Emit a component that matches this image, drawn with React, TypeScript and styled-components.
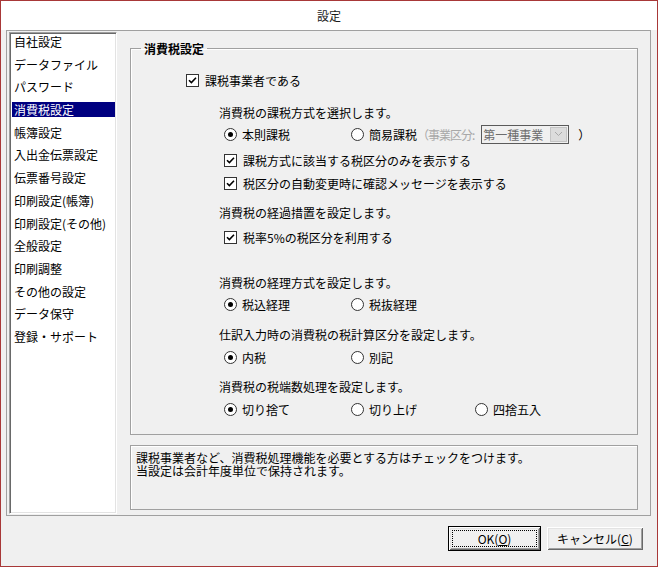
import styled, { createGlobalStyle } from "styled-components";

const GlobalStyle = createGlobalStyle`
  html, body {
    margin: 0;
    padding: 0;
    background: #f0f0f0;
  }
  body {
    font-family: "Noto Sans CJK JP", "Noto Sans", sans-serif;
    font-size: 12px;
    color: #000;
    overflow: hidden;
  }
  * {
    box-sizing: border-box;
  }
`;

const menuItems = [
    "自社設定",
    "データファイル",
    "パスワード",
    "消費税設定",
    "帳簿設定",
    "入出金伝票設定",
    "伝票番号設定",
    "印刷設定(帳簿)",
    "印刷設定(その他)",
    "全般設定",
    "印刷調整",
    "その他の設定",
    "データ保守",
    "登録・サポート",
];

const Window = styled.div`
    width: 658px;
    height: 567px;
    border: 1px solid #a83838;
    background: #f0f0f0;
    display: flex;
    flex-direction: column;
`;

const TitleBar = styled.div`
    height: 29px;
    background: #fff;
    display: flex;
    align-items: center;
    justify-content: center;
    color: #1a1a1a;
`;

const Client = styled.div`
    flex: 1;
    padding: 0 6px 0 5px;
    display: flex;
    flex-direction: column;
`;

const Frame = styled.div`
    height: 486px;
    border: 1px solid #a0a0a0;
    padding: 1px 0 1px 2px;
    display: flex;
`;

const Sidebar = styled.ul`
    width: 108px;
    margin: 0;
    padding: 1px 1px 0 2px;
    list-style: none;
    background: #fff;
    border-top: 1px solid #a0a0a0;
    border-left: 1px solid #a0a0a0;
    border-right: 1px solid #fff;
    border-bottom: 1px solid #fff;
    box-shadow: inset 1px 1px #696969, inset -1px -1px #e3e3e3;
`;

const MenuItem = styled.li`
    height: 22.7px;
`;

const MenuLabel = styled.span<{ $active?: boolean }>`
    display: block;
    height: 15px;
    line-height: 15px;
    padding-left: 2px;
    white-space: nowrap;
    background: ${(p) => (p.$active ? "#000080" : "transparent")};
    color: ${(p) => (p.$active ? "#fff" : "#000")};
`;

const Main = styled.div`
    flex: 1;
    margin: 10px 12px 0 13px;
    display: flex;
    flex-direction: column;
`;

const GroupBox = styled.fieldset`
    margin: 0;
    padding: 0;
    min-width: 0;
    border: 1px solid #a0a0a0;
    box-shadow: inset 1px 1px #fff;
`;

const Legend = styled.legend`
    margin-left: 10px;
    padding: 0 3px;
    line-height: 13px;
    font-weight: bold;
`;

const GroupBody = styled.div`
    padding: 15px 0 15px 55px;
    display: flex;
    flex-direction: column;
`;

const Row = styled.div<{ $gap: number; $indent?: number }>`
    height: 20px;
    margin-top: ${(p) => p.$gap}px;
    margin-left: ${(p) => p.$indent ?? 0}px;
    display: flex;
    align-items: center;
    white-space: nowrap;
`;

const RadioGrid = styled.div<{ $gap: number }>`
    height: 20px;
    margin-top: ${(p) => p.$gap}px;
    margin-left: 38px;
    display: grid;
    grid-template-columns: 127px 124px auto;
    align-items: center;
    white-space: nowrap;
`;

const Option = styled.label`
    display: flex;
    align-items: center;
    gap: 5px;
`;

const CheckBox = styled.span`
    flex-shrink: 0;
    width: 13px;
    height: 13px;
    border: 1px solid #333;
    background: #fff;
    display: inline-flex;
    align-items: center;
    justify-content: center;
    margin-right: 1px;
`;

const RadioCircle = styled.span`
    flex-shrink: 0;
    width: 13px;
    height: 13px;
    border: 1px solid #333;
    border-radius: 50%;
    background: #fff;
    display: inline-flex;
    align-items: center;
    justify-content: center;
`;

const RadioDot = styled.span`
    width: 5px;
    height: 5px;
    border-radius: 50%;
    background: #000;
`;

const Muted = styled.span`
    color: #a8a8a8;
    letter-spacing: -1px;
`;

const Combo = styled.span`
    flex-shrink: 0;
    width: 88px;
    height: 19px;
    margin: 0 4px 0 2px;
    border: 1px solid #5a5a5a;
    background: #f0f0f0;
    display: inline-flex;
    align-items: stretch;
`;

const ComboText = styled.span`
    flex: 1;
    padding-left: 1px;
    line-height: 17px;
    color: #6d6d6d;
`;

const ComboButton = styled.span`
    flex-shrink: 0;
    width: 17px;
    margin: 1px;
    background: #dcdcdc;
    border: 1px solid #c4c4c4;
    display: inline-flex;
    align-items: center;
    justify-content: center;
`;

const Description = styled.div`
    height: 65px;
    margin-top: 10px;
    padding: 5px 5px;
    border: 1px solid #a0a0a0;
    box-shadow: inset 1px 1px #fff;
`;

const DescLine = styled.div`
    height: 13px;
    line-height: 13px;
    white-space: nowrap;
`;

const Footer = styled.div`
    display: flex;
    justify-content: flex-end;
    gap: 5px;
    padding: 10px 7px 0 0;
`;

const Button = styled.button<{ $default?: boolean; $width: number }>`
    position: relative;
    width: ${(p) => p.$width}px;
    height: 25px;
    padding: 0;
    font: inherit;
    color: #000;
    background: #f0f0f0;
    border: 1px solid ${(p) => (p.$default ? "#000" : "#f0f0f0")};
    box-shadow: inset 1px 1px #fff, inset -1px -1px #696969,
        inset 2px 2px #e3e3e3, inset -2px -2px #a0a0a0;

    ${(p) =>
        p.$default &&
        `&::after {
            content: "";
            position: absolute;
            inset: 3px;
            border: 1px dotted #000;
        }`}
`;

const Key = styled.span`
    text-decoration: underline;
`;

const Check = () => (
    <CheckBox>
        <svg width="9" height="9" viewBox="0 0 9 9">
            <path d="M1 4.2 L3.4 6.6 L8 1.8" fill="none" stroke="#000" strokeWidth="1.6" />
        </svg>
    </CheckBox>
);

const Radio = ({ checked }: { checked?: boolean }) => (
    <RadioCircle>{checked && <RadioDot />}</RadioCircle>
);

export default function App() {
    return (
        <>
            <GlobalStyle />
            <Window>
                <TitleBar>設定</TitleBar>
                <Client>
                    <Frame>
                        <Sidebar>
                            {menuItems.map((item) => (
                                <MenuItem key={item}>
                                    <MenuLabel $active={item === "消費税設定"}>{item}</MenuLabel>
                                </MenuItem>
                            ))}
                        </Sidebar>
                        <Main>
                            <GroupBox>
                                <Legend>消費税設定</Legend>
                                <GroupBody>
                                    <Row $gap={0}>
                                        <Option>
                                            <Check />
                                            課税事業者である
                                        </Option>
                                    </Row>

                                    <Row $gap={12} $indent={33}>消費税の課税方式を選択します。</Row>
                                    <RadioGrid $gap={2}>
                                        <Option>
                                            <Radio checked />
                                            本則課税
                                        </Option>
                                        <Option>
                                            <Radio />
                                            <span>
                                                簡易課税<Muted>（事業区分:</Muted>
                                            </span>
                                            <Combo>
                                                <ComboText>第一種事業</ComboText>
                                                <ComboButton>
                                                    <svg width="9" height="6" viewBox="0 0 9 6">
                                                        <path d="M1 1 L4.5 4.5 L8 1" fill="none" stroke="#a8a8a8" strokeWidth="1" />
                                                    </svg>
                                                </ComboButton>
                                            </Combo>
                                            ）
                                        </Option>
                                    </RadioGrid>
                                    <Row $gap={6} $indent={38}>
                                        <Option>
                                            <Check />
                                            課税方式に該当する税区分のみを表示する
                                        </Option>
                                    </Row>
                                    <Row $gap={3} $indent={38}>
                                        <Option>
                                            <Check />
                                            税区分の自動変更時に確認メッセージを表示する
                                        </Option>
                                    </Row>

                                    <Row $gap={9} $indent={33}>消費税の経過措置を設定します。</Row>
                                    <Row $gap={5} $indent={38}>
                                        <Option>
                                            <Check />
                                            税率5%の税区分を利用する
                                        </Option>
                                    </Row>

                                    <Row $gap={25} $indent={33}>消費税の経理方式を設定します。</Row>
                                    <RadioGrid $gap={2}>
                                        <Option>
                                            <Radio checked />
                                            税込経理
                                        </Option>
                                        <Option>
                                            <Radio />
                                            税抜経理
                                        </Option>
                                    </RadioGrid>

                                    <Row $gap={10} $indent={33}>仕訳入力時の消費税の税計算区分を設定します。</Row>
                                    <RadioGrid $gap={3}>
                                        <Option>
                                            <Radio checked />
                                            内税
                                        </Option>
                                        <Option>
                                            <Radio />
                                            別記
                                        </Option>
                                    </RadioGrid>

                                    <Row $gap={9} $indent={33}>消費税の税端数処理を設定します。</Row>
                                    <RadioGrid $gap={3}>
                                        <Option>
                                            <Radio checked />
                                            切り捨て
                                        </Option>
                                        <Option>
                                            <Radio />
                                            切り上げ
                                        </Option>
                                        <Option>
                                            <Radio />
                                            四捨五入
                                        </Option>
                                    </RadioGrid>
                                </GroupBody>
                            </GroupBox>
                            <Description>
                                <DescLine>課税事業者など、消費税処理機能を必要とする方はチェックをつけます。</DescLine>
                                <DescLine>当設定は会計年度単位で保持されます。</DescLine>
                            </Description>
                        </Main>
                    </Frame>
                    <Footer>
                        <Button $default $width={93}>
                            OK(<Key>O</Key>)
                        </Button>
                        <Button $width={98}>
                            キャンセル(<Key>C</Key>)
                        </Button>
                    </Footer>
                </Client>
            </Window>
        </>
    );
}
